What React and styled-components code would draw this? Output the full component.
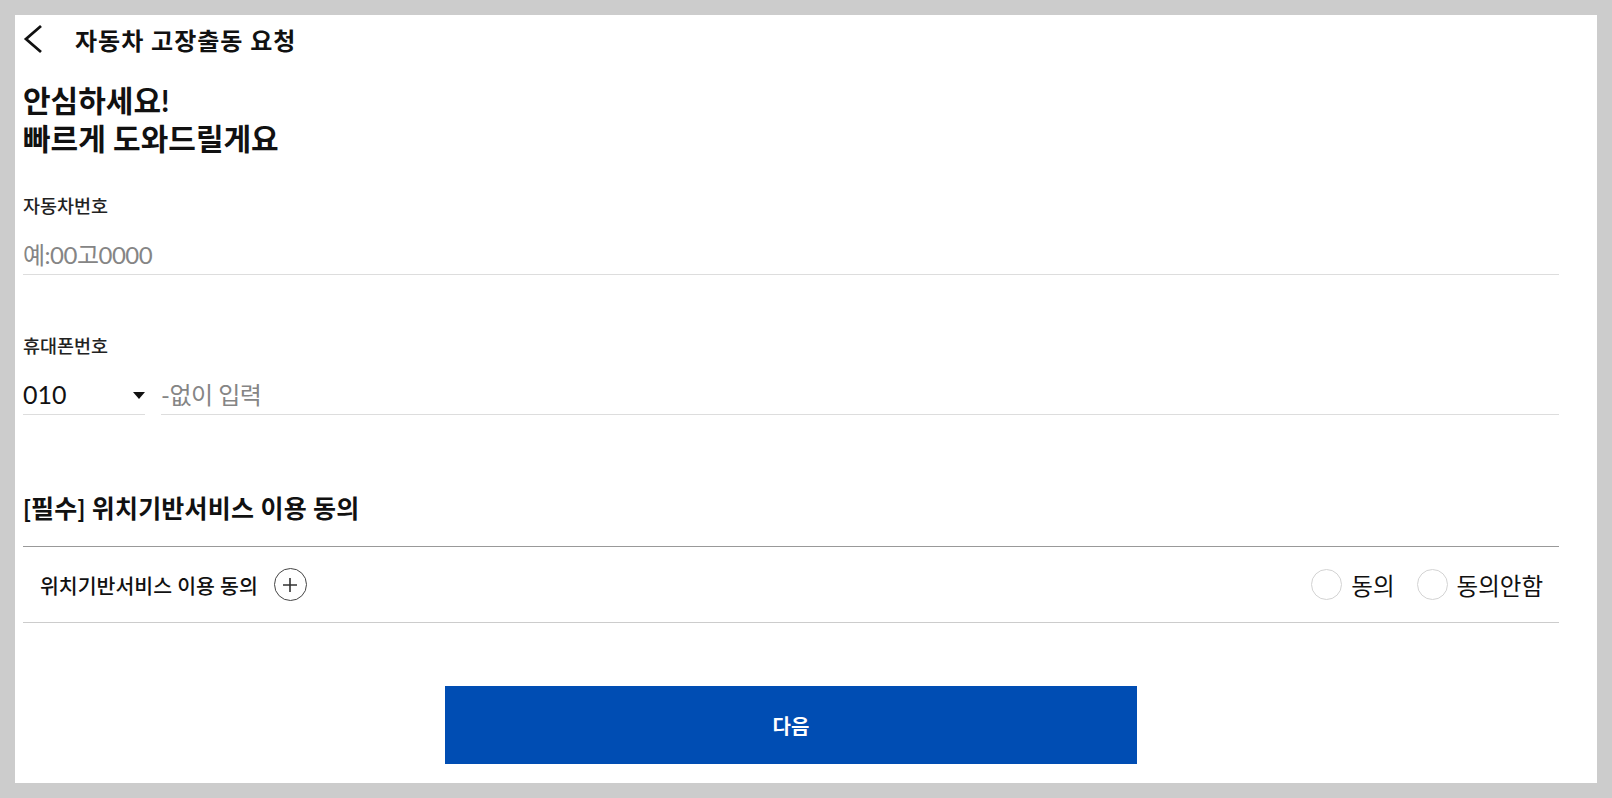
import React from "react";
import styled, { createGlobalStyle } from "styled-components";

const GlobalStyle = createGlobalStyle`
  *, *::before, *::after {
    box-sizing: border-box;
  }
  html, body, #root {
    height: 100%;
  }
  body {
    margin: 0;
    padding: 15px;
    background: #cccccc;
    font-family: Lato, "Noto Sans CJK KR", sans-serif;
    color: #111;
  }
`;

const Page = styled.div`
  height: 100%;
  background: #fff;
  padding: 0 38px 0 8px;
`;

const Header = styled.header`
  height: 48px;
  display: flex;
  align-items: center;
`;

const BackButton = styled.button`
  width: 20px;
  height: 30px;
  padding: 0;
  border: none;
  background: none;
  display: flex;
  align-items: center;
  justify-content: center;
  cursor: pointer;
`;

const Title = styled.h1`
  margin: 0 0 0 32px;
  font-size: 24px;
  font-weight: 700;
  letter-spacing: 1px;
`;

const Heading = styled.h2`
  margin: 18px 0 0;
  font-size: 30px;
  line-height: 38px;
  font-weight: 700;
`;

const Field = styled.div`
  margin-top: ${props => props.$top}px;
`;

const Label = styled.div`
  font-size: 18.5px;
  line-height: 24px;
  font-weight: 500;
  color: #222;
`;

const Row = styled.div`
  display: flex;
  gap: 16px;
  margin-top: 16px;
`;

const Input = styled.input`
  flex: 1;
  width: 100%;
  height: 41px;
  padding: 0;
  border: none;
  border-bottom: 1px solid #dddddd;
  outline: none;
  font-family: inherit;
  font-size: 24px;
  letter-spacing: -0.5px;
  color: #111;
  &::placeholder {
    color: #858585;
  }
`;

const Select = styled.div`
  width: 122px;
  flex: none;
  height: 41px;
  display: flex;
  align-items: center;
  justify-content: space-between;
  border-bottom: 1px solid #dddddd;
  font-size: 25px;
  color: #111;
`;

const Arrow = styled.span`
  width: 0;
  height: 0;
  border-left: 6px solid transparent;
  border-right: 6px solid transparent;
  border-top: 7px solid #111;
  margin-top: 2px;
`;

const SectionTitle = styled.h3`
  margin: 77px 0 0;
  font-size: 25px;
  line-height: 32px;
  font-weight: 700;
  letter-spacing: 0.2px;
  padding-bottom: 22px;
  border-bottom: 1px solid #999;
`;

const AgreeRow = styled.div`
  height: 76px;
  display: flex;
  align-items: center;
  justify-content: space-between;
  padding: 0 16px 0 17px;
  border-bottom: 1px solid #cccccc;
`;

const AgreeText = styled.div`
  display: flex;
  align-items: center;
  gap: 16px;
  font-size: 20.5px;
  font-weight: 500;
`;

const PlusButton = styled.button`
  width: 33px;
  height: 33px;
  padding: 0;
  border: 1.5px solid #444;
  border-radius: 50%;
  background: #fff;
  display: flex;
  align-items: center;
  justify-content: center;
  cursor: pointer;
`;

const RadioGroup = styled.div`
  display: flex;
  align-items: center;
  gap: 22px;
`;

const RadioLabel = styled.label`
  display: flex;
  align-items: center;
  gap: 9px;
  font-size: 23.5px;
  cursor: pointer;
`;

const RadioCircle = styled.span`
  width: 31px;
  height: 31px;
  border: 1.5px solid #d3d3d3;
  border-radius: 50%;
  background: #fff;
`;

const ButtonWrap = styled.div`
  display: flex;
  justify-content: center;
  margin-top: 63px;
`;

const NextButton = styled.button`
  width: 45%;
  height: 78px;
  border: none;
  background: #004db3;
  color: #fff;
  font-family: inherit;
  font-size: 20px;
  font-weight: 700;
  cursor: pointer;
`;

const ChevronLeft = () => (
  <svg width="20" height="30" viewBox="0 0 20 30" fill="none">
    <path d="M18 2 L3 15 L18 28" stroke="#111" strokeWidth="2.8" />
  </svg>
);

const PlusIcon = () => (
  <svg width="16" height="16" viewBox="0 0 16 16">
    <path d="M8 1 V15 M1 8 H15" stroke="#333" strokeWidth="1.6" />
  </svg>
);

export default function App() {
  return (
    <>
      <GlobalStyle />
      <Page>
        <Header>
          <BackButton aria-label="뒤로">
            <ChevronLeft />
          </BackButton>
          <Title>자동차 고장출동 요청</Title>
        </Header>

        <Heading>
          안심하세요!
          <br />
          빠르게 도와드릴게요
        </Heading>

        <Field $top={37}>
          <Label>자동차번호</Label>
          <Row>
            <Input placeholder="예:00고0000" />
          </Row>
        </Field>

        <Field $top={59}>
          <Label>휴대폰번호</Label>
          <Row>
            <Select>
              010
              <Arrow />
            </Select>
            <Input placeholder="-없이 입력" />
          </Row>
        </Field>

        <SectionTitle>[필수] 위치기반서비스 이용 동의</SectionTitle>
        <AgreeRow>
          <AgreeText>
            위치기반서비스 이용 동의
            <PlusButton aria-label="자세히 보기">
              <PlusIcon />
            </PlusButton>
          </AgreeText>
          <RadioGroup>
            <RadioLabel>
              <RadioCircle />
              동의
            </RadioLabel>
            <RadioLabel>
              <RadioCircle />
              동의안함
            </RadioLabel>
          </RadioGroup>
        </AgreeRow>

        <ButtonWrap>
          <NextButton>다음</NextButton>
        </ButtonWrap>
      </Page>
    </>
  );
}
